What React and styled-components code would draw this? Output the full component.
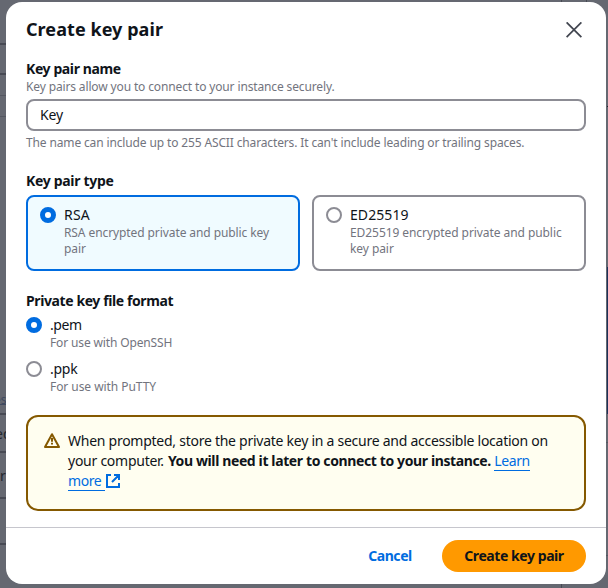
import React from 'react';
import styled, { createGlobalStyle } from 'styled-components';

const GlobalStyle = createGlobalStyle`
  *, *::before, *::after { box-sizing: border-box; }
  body {
    margin: 0;
    overflow: hidden;
    background: #656871;
    color: #0f141a;
    font: 400 14px/20px "Noto Sans", sans-serif;
  }
`;

const Page = styled.main`
  position: relative;
  width: 608px;
  height: 588px;
  padding: 2px 2px 4px 6px;
  overflow: hidden;
`;

/* Pieces of the dimmed page that show around the dialog. */
const BackdropRule = styled.span`
  position: absolute;
  left: ${p => p.$x ?? 0}px;
  top: ${p => p.$y}px;
  width: ${p => p.$w ?? 6}px;
  height: ${p => p.$h ?? 1}px;
  background: ${p => p.$color ?? '#474a54'};
`;

const BackdropText = styled.span`
  position: absolute;
  left: ${p => p.$x ?? 0}px;
  top: ${p => p.$y}px;
  color: ${p => p.$color ?? '#23262d'};
  font-size: ${p => p.$size ?? 14}px;
  line-height: 20px;
`;

const Dialog = styled.section`
  position: relative;
  display: flex;
  flex-direction: column;
  width: 600px;
  height: 582px;
  border-radius: 16px;
  background: #fff;
`;

const Header = styled.header`
  display: flex;
  align-items: center;
  justify-content: space-between;
  height: 57px;
  padding: 0 20px 2px;
`;

const Title = styled.h2`
  margin: 0 0 2px;
  font-size: 18px;
  line-height: 22px;
  font-weight: 700;
  letter-spacing: 0.06px;
`;

const CloseButton = styled.button`
  display: flex;
  padding: 4px;
  border: 0;
  background: none;
  color: #424650;
`;

const Body = styled.div`
  display: flex;
  flex-direction: column;
  gap: 20px;
  padding: 0 20px 16px;
`;

const Field = styled.div`
  display: flex;
  flex-direction: column;
`;

const Label = styled.div`
  font-weight: 700;
  letter-spacing: ${p => p.$track ?? -0.4}px;
`;

const Hint = styled.div`
  color: #72747e;
  font-size: 12px;
  line-height: 16px;
  letter-spacing: ${p => p.$track ?? -0.137}px;
`;

const Input = styled.input`
  height: 32px;
  margin: 4px 0;
  padding: 0 12px 2px;
  border: 2px solid #8c8c94;
  border-radius: 8px;
  outline: 0;
  background: #fff;
  color: #0f141a;
  font: inherit;
  letter-spacing: -0.15px;
`;

const Tiles = styled.div`
  display: grid;
  grid-template-columns: 1fr 1fr;
  gap: 12px;
  margin-top: 4px;
`;

const Tile = styled.div`
  display: flex;
  height: 76px;
  padding: 8px 12px;
  border: 2px solid ${p => (p.$selected ? '#006ce0' : '#8c8c94')};
  border-radius: 8px;
  background: ${p => (p.$selected ? '#f0fbff' : '#fff')};
`;

const Options = styled.div`
  display: flex;
  flex-direction: column;
  gap: 8px;
  margin-top: 4px;
`;

const Option = styled.div`
  display: flex;
  align-items: flex-start;
  gap: 8px;
`;

const Radio = styled.span`
  flex: none;
  width: 16px;
  height: 16px;
  margin-top: 2px;
  border: ${p => (p.$checked ? '5px solid #006ce0' : '2px solid #8c8c94')};
  border-radius: 50%;
  background: #fff;
`;

const OptionName = styled.div`
  letter-spacing: ${p => p.$track ?? 0}px;
`;

const Alert = styled.div`
  display: flex;
  gap: 8px;
  height: 96px;
  padding: 14px 16px 0;
  border: 2px solid #855900;
  border-radius: 12px;
  background: #fffef0;
`;

const WarningIcon = styled.svg`
  flex: none;
  margin-top: 1px;
`;

const AlertText = styled.div`
  white-space: nowrap;
  letter-spacing: -0.26px;
`;

const Strong = styled.b`
  margin-left: 0.7px;
  letter-spacing: -0.38px;
`;

const Link = styled.a`
  display: inline-block;
  height: 20px;
  border-bottom: 1px solid #006ce0;
  color: #006ce0;
  letter-spacing: -0.4px;
  white-space: pre;
`;

const ExternalIcon = styled.svg`
  margin-left: 1px;
  vertical-align: -2px;
`;

const Footer = styled.footer`
  display: flex;
  justify-content: flex-end;
  gap: 8px;
  padding: 12px 20px;
  border-top: 1px solid #c6c6cd;
`;

const Button = styled.button`
  width: ${p => (p.$primary ? 144 : 88)}px;
  height: 32px;
  padding: 0;
  border: 0;
  border-radius: 20px;
  background: ${p => (p.$primary ? '#ff9900' : 'transparent')};
  color: ${p => (p.$primary ? '#0f141a' : '#006ce0')};
  font: inherit;
  font-weight: 700;
  letter-spacing: -0.43px;
`;

function RadioOption({ name, hint, checked, nameTrack, hintTrack }) {
  return (
    <Option>
      <Radio $checked={checked} />
      <div>
        <OptionName $track={nameTrack}>{name}</OptionName>
        <Hint $track={hintTrack}>{hint}</Hint>
      </div>
    </Option>
  );
}

export default function App() {
  return (
    <>
      <GlobalStyle />
      <Page>
        <BackdropRule $y={43} $h={2} />
        <BackdropRule $y={73} $h={2} />
        <BackdropRule $y={95} $color="#545761" />
        <BackdropRule $y={116} $color="#545761" />
        <BackdropText $x={-6} $y={390} $size={12} $color="#404a60">es</BackdropText>
        <BackdropRule $y={404} $color="#404a60" />
        <BackdropRule $y={413} $h={2} />
        <BackdropText $x={-5} $y={424}>ed</BackdropText>
        <BackdropRule $y={451} $h={2} />
        <BackdropText $y={466}>r</BackdropText>
        <BackdropRule $y={497} $h={2} />
        <BackdropRule $y={543} $h={2} />
        <BackdropRule $x={561} $y={0} $w={1} $h={2} />
        <BackdropRule $x={586} $y={0} $w={1} $h={2} />
        <BackdropRule $x={561} $y={584} $w={1} $h={4} />
        <BackdropRule $x={607} $y={106} $w={1} $color="#20232b" />
        <BackdropRule $x={607} $y={267} $w={1} $h={147} $color="#1c3058" />
        <BackdropRule $x={606} $y={442} $w={2} $color="#545761" />
        <BackdropRule $x={606} $y={555} $w={2} $color="#545761" />

        <Dialog>
          <Header>
            <Title>Create key pair</Title>
            <CloseButton aria-label="Close">
              <svg width="16" height="16" viewBox="0 0 16 16" fill="none" stroke="currentColor" strokeWidth="1.8">
                <path d="M.6.4 15.4 15.2M15.4.4.6 15.2" />
              </svg>
            </CloseButton>
          </Header>

          <Body>
            <Field>
              <Label>Key pair name</Label>
              <Hint>Key pairs allow you to connect to your instance securely.</Hint>
              <Input defaultValue="Key" aria-label="Key pair name" />
              <Hint>The name can include up to 255 ASCII characters. It can't include leading or trailing spaces.</Hint>
            </Field>

            <Field>
              <Label $track={-0.32}>Key pair type</Label>
              <Tiles>
                <Tile $selected>
                  <RadioOption checked name="RSA" nameTrack={0.2} hint="RSA encrypted private and public key pair" hintTrack={-0.09} />
                </Tile>
                <Tile>
                  <RadioOption name="ED25519" nameTrack={0.07} hint="ED25519 encrypted private and public key pair" hintTrack={-0.07} />
                </Tile>
              </Tiles>
            </Field>

            <Field>
              <Label>Private key file format</Label>
              <Options>
                <RadioOption checked name=".pem" nameTrack={-0.4} hint="For use with OpenSSH" />
                <RadioOption name=".ppk" nameTrack={-0.25} hint="For use with PuTTY" hintTrack={-0.06} />
              </Options>
            </Field>

            <Alert>
              <WarningIcon width="16" height="16" viewBox="0 0 16 16" fill="none" stroke="#855900" strokeWidth="2" strokeLinejoin="round">
                <path d="M8 2.2 15 15H1Z" />
                <path d="M8 6v3.8M8 10.8v1.8" />
              </WarningIcon>
              <AlertText>
                When prompted, store the private key in a secure and accessible location on<br />
                your computer. <Strong>You will need it later to connect to your instance.</Strong> <Link>Learn</Link><br />
                <Link>{'more '}</Link>
                <ExternalIcon width="14" height="14" viewBox="0 0 14 14" fill="none" stroke="#006ce0" strokeWidth="2">
                  <path d="M5 1H1v12h12V9M8 1h5v5M13 1 6 8" />
                </ExternalIcon>
              </AlertText>
            </Alert>
          </Body>

          <Footer>
            <Button>Cancel</Button>
            <Button $primary>Create key pair</Button>
          </Footer>
        </Dialog>
      </Page>
    </>
  );
}
